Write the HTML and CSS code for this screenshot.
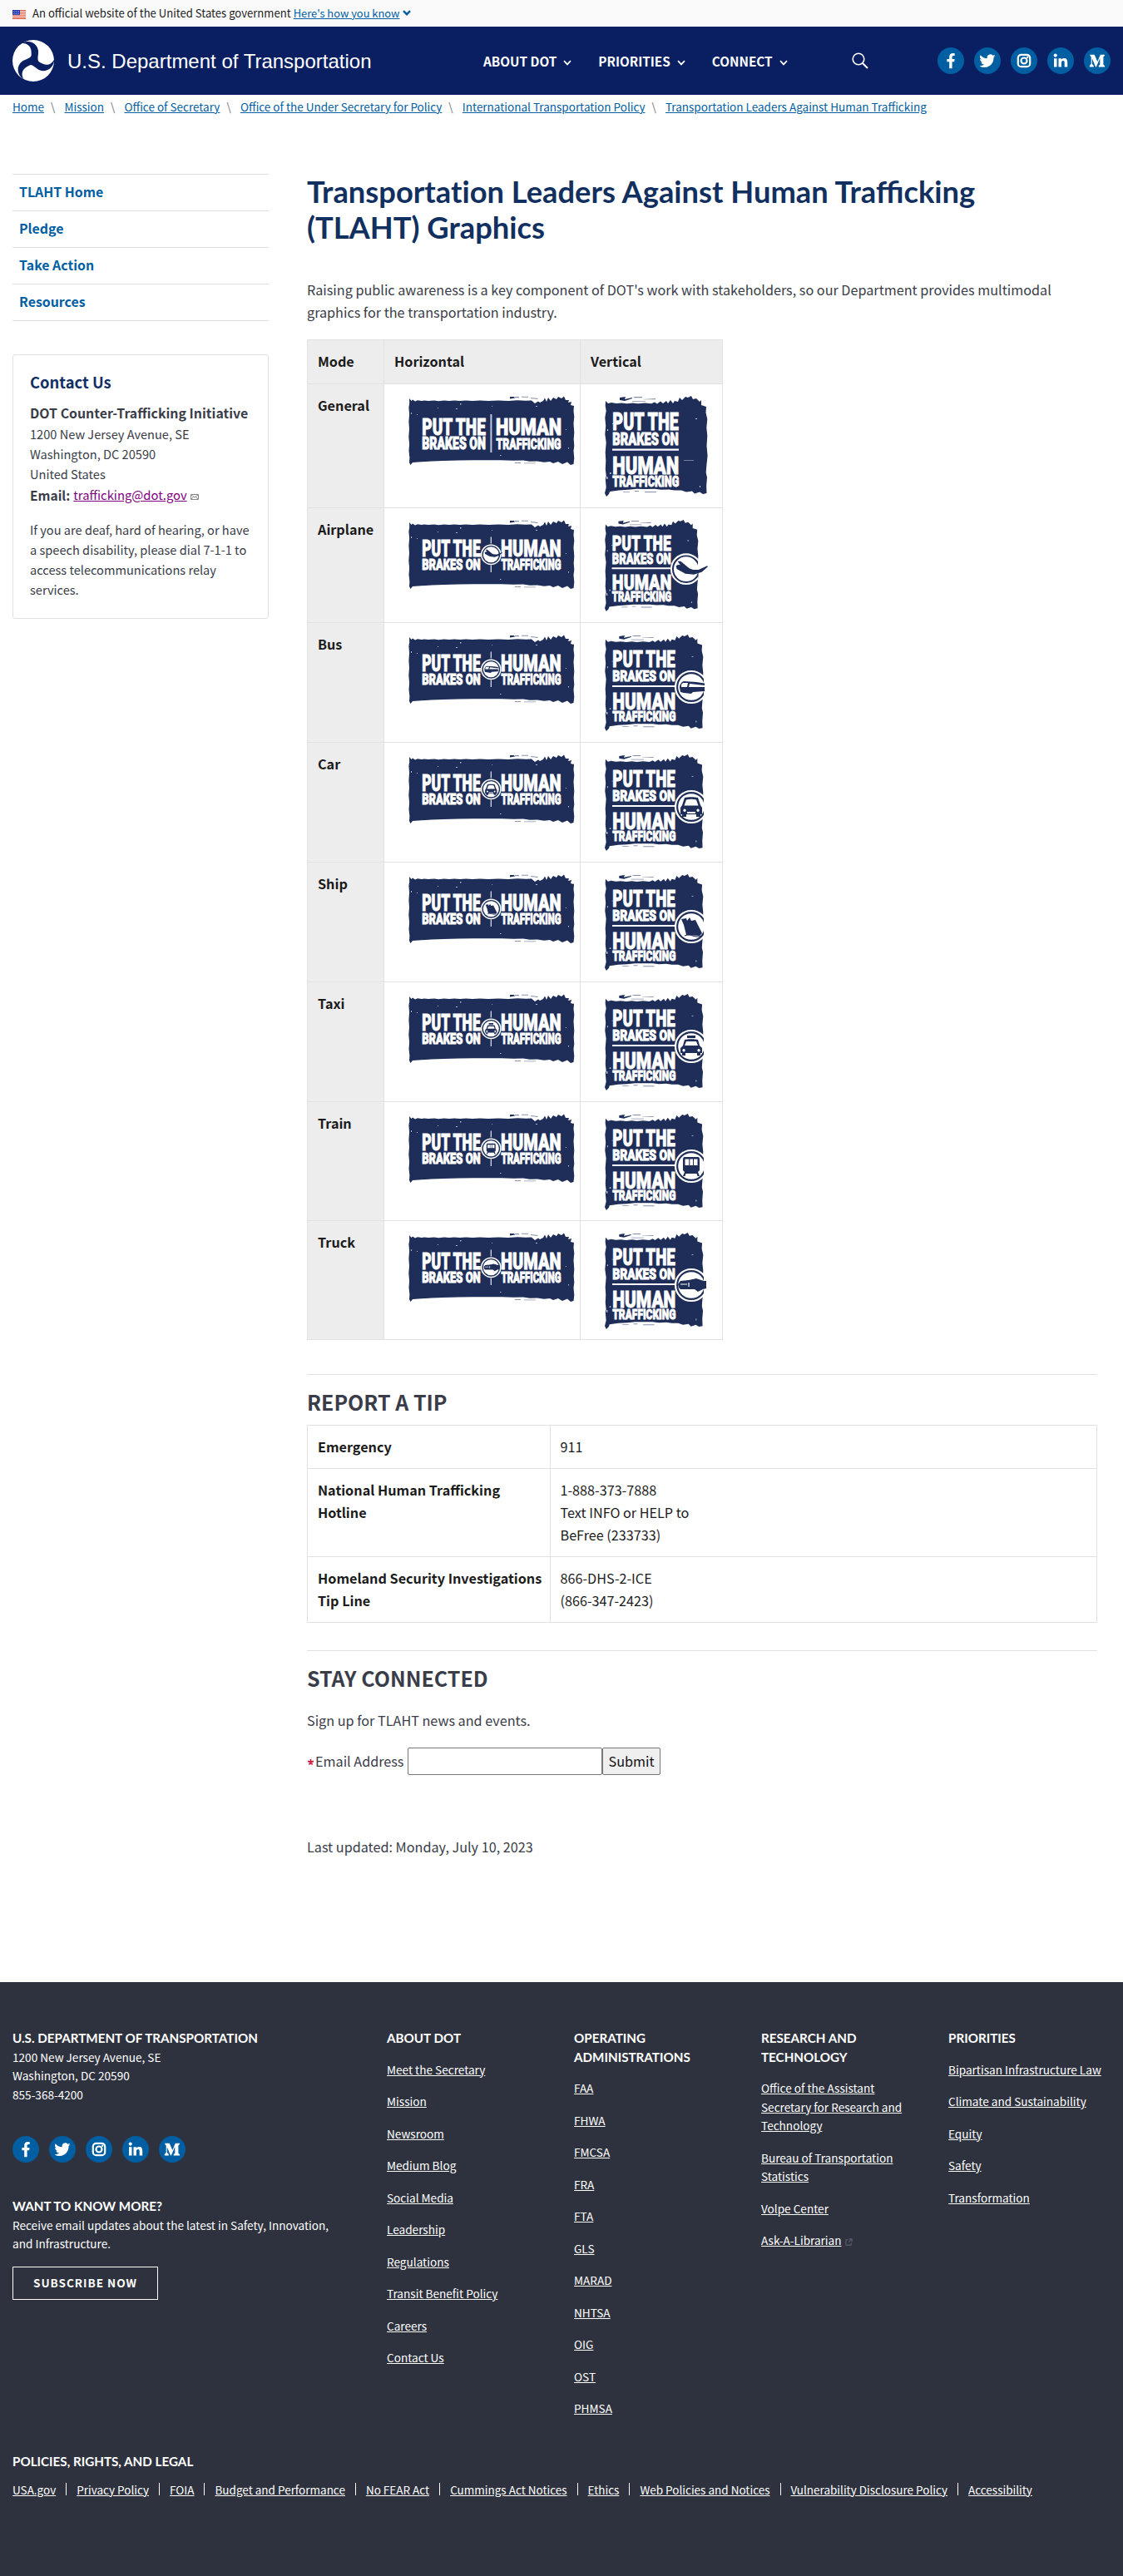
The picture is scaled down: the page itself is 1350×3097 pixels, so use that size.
FILE: index.html
```
<!DOCTYPE html>
<html lang="en">
<head>
<meta charset="utf-8">
<title>Transportation Leaders Against Human Trafficking (TLAHT) Graphics</title>
<link rel="stylesheet" href="styles.css">
</head>
<body>
<svg class="defs" width="0" height="0" aria-hidden="true">
  <symbol id="chev" viewBox="0 0 10 7"><path d="M1 1.2 5 5.4 9 1.2" fill="none" stroke="currentColor" stroke-width="1.7"/></symbol>
  <symbol id="fb" viewBox="0 0 32 32"><circle cx="16" cy="16" r="16" fill="#005ea2"/><path fill="#fff" d="M14.2 25.2v-8H11.400v-3.300h2.800v-2.500c0-2.900 1.700-4.400 4.200-4.400 1.200 0 2.300.2 2.300.2v2.700h-1.400c-1.300 0-1.700.8-1.700 1.700v2.300h3l-.5 3.300h-2.500v8z"/></symbol>
  <symbol id="tw" viewBox="0 0 32 32"><circle cx="16" cy="16" r="16" fill="#005ea2"/><path fill="#fff" d="M25.500 10.300a7.800 7.800 0 0 1-2.200.6 3.900 3.900 0 0 0 1.700-2.200 7.800 7.800 0 0 1-2.500 1 3.900 3.900 0 0 0-6.700 3.600 11.100 11.100 0 0 1-8.100-4.100 3.900 3.900 0 0 0 1.200 5.200 3.900 3.900 0 0 1-1.800-.5c0 1.900 1.300 3.500 3.100 3.900a3.900 3.900 0 0 1-1.700.1 3.900 3.900 0 0 0 3.600 2.700 7.900 7.900 0 0 1-5.700 1.600 11.100 11.100 0 0 0 17.100-9.900 7.900 7.900 0 0 0 2-2z"/></symbol>
  <symbol id="ig" viewBox="0 0 32 32"><circle cx="16" cy="16" r="16" fill="#005ea2"/><g fill="none" stroke="#fff" stroke-width="2.200"><rect x="8.800" y="8.800" width="14.400" height="14.400" rx="3.800"/><circle cx="16" cy="16" r="3.500"/></g><circle cx="20.200" cy="11.800" r="1.200" fill="#fff"/></symbol>
  <symbol id="li" viewBox="0 0 32 32"><circle cx="16" cy="16" r="16" fill="#005ea2"/><path fill="#fff" d="M8 13.200h3.500V23.500H8zM13.500 13.200h3.300v1.500c.6-1 1.700-1.800 3.300-1.800 3.300 0 4.100 2.100 4.100 5v5.600h-3.500v-5c0-1.400-.2-2.600-1.700-2.600s-2 1.200-2 2.600v5h-3.500z"/><circle cx="9.750" cy="9.600" r="2.050" fill="#fff"/></symbol>
  <symbol id="md" viewBox="0 0 32 32"><circle cx="16" cy="16" r="16" fill="#005ea2"/><path fill="#fff" d="M7.300 8.800h5.400L16.300 17l3.500-8.200H25v1.300l-1.600 1.200v9.500l1.600 1.300v1.300h-7.300v-1.300l1.600-1.300v-7.700l-4.500 10.300h-.7L9.800 13.200v6.500l2 2.400v1.300H6.800v-1.300l1.900-2.400v-8.200L7.300 10z"/></symbol>

  <symbol id="brush-h" viewBox="0 0 200 84" preserveAspectRatio="none">
    <path fill="#1e2e58" d="M1 3 3.500 6 5 4.500 8 6.500 11 5.200 16 6 19 5.400 24 6 31 5.500 36 6.200 43 5.600 49 6 55 5.400 62 6 69 5.600 77 6 86 5.500 96 6 108 5.600 120 6 131 5.300 141 5.800 148 5.500 152 9 156 6.500 158 8 162 6 164 2.500 166 7 168 2 171 6 174 2 178 4 180 1 184 3 187 .5 189 5 193 5 192 8 196 7 195 11 199 12 198.500 18 199.300 25 198.500 33 199.300 44 198.700 52 199.300 60 198.500 66 199.300 75 198.500 82 195 83 191 79.500 185 82 180 79 174 81 170 79 163 79.800 155 78.500 146 78.800 138 77.600 126 77.800 112 77.200 95 77.200 78 77.200 60 77.600 42 78 28 78.600 12 79.400 5 80 2.500 83 1 80 1.400 74 .5 66 1.100 58 .3 49 1 40 .4 31 1.100 22 .4 14 1.200 9z"/>
    <path fill="#8b93aa" d="M128 1h5v1.200h-5zM136 .8h8v1h-8zM147 2l9 1-1 1-8-1zM128 80h7v1h-7zM139 80.500h14v.8h-14z"/><path fill="#1e2e58" d="M122 1h5l1 1.500-6 1z"/>
    <path fill="#fff" d="M62 9h1.500v1.500H62zM57 15h2v1h-2zM10 22h1v1h-1zM35 14h1v1h-1zM153 12h2v1h-2zM110 71h1.500v1H110zM3 20h1v2H3zM100 12h1v.8h-1zM189 40h1v1h-1zM192 62h1v1.500h-1z" opacity=".65"/>
  </symbol>
  <symbol id="brush-v" viewBox="0 0 124 121" preserveAspectRatio="none">
    <path fill="#1e2e58" d="M1 6 4 9 8 8 14 9 20 8.600 27 9.300 34 8.500 40 9.300 48 8.500 56 9.300 60 7.500 63 9.500 67 6.500 70 9 74 6 76 9 79 5 82 9 84 6 88 7 90 2 93 5 97 1 100 2 104 0 106 4 110 3 114 7 116 5 116 11 122 13 121.500 20 123.300 28 122.300 38 123.300 48 122.500 60 123.600 72 122.300 84 121.700 92 123 98 122.200 108 122.500 117 118 118 114 115.500 108 117.500 105 114.500 98 115.500 92 113.500 84 113.500 77 112.500 68 112.800 60 111.800 48 112 38 111.800 28 112.800 17 113.500 6 115 5 118 2 121 0 117 1.700 110 .8 100 1.700 96 .8 88 1.300 78 .7 68 1.700 56 .3 46 1.200 36 .3 26 1.700 18 .7 12z"/>
    <path fill="#1e2e58" d="M18 2l7-1-1 3 9-2v1l-9 3-6-1z"/><path fill="#8490ad" d="M35 1h10v1.200H35zM46 4l15-1v1.300H47zM33 6h16v.8H33zM22 115h8v.8h-8zM36 114h5v1h-5zM48 115h14v1H48z"/>
    <path fill="#fff" d="M2 97h1.500v3H2zM6 92h1.500v2H6zM3 40h1v2H3zM109 27h2v1h-2zM95 77h12v.6H95zM114 108h1v2h-1zM9 33h1v1H9z" opacity=".75"/>
  </symbol>

  <symbol id="text-h" viewBox="0 0 200 84">
    <g class="slogan"><text x="16.200" y="44" font-size="27" textLength="70.500" lengthAdjust="spacingAndGlyphs">PUT THE</text><text x="16.200" y="59.700" font-size="18.500" textLength="70.500" lengthAdjust="spacingAndGlyphs">BRAKES ON</text><text x="111" y="44" font-size="27" textLength="72.500" lengthAdjust="spacingAndGlyphs">HUMAN</text><text x="111.500" y="59.700" font-size="17.500" textLength="72" lengthAdjust="spacingAndGlyphs">TRAFFICKING</text></g>
    <path d="M99.300 20.500v8M99.300 54.500v8.500" stroke="#e4e8f2" stroke-width="1.200"/>
    <circle cx="99.300" cy="41.800" r="11.600" fill="#1e2e58" stroke="#fff" stroke-width="1.500"/><circle cx="99.300" cy="41.800" r="9.500" fill="#fff"/>
  </symbol>
  <symbol id="text-v" viewBox="0 0 119 116">
    <g class="slogan"><text x="9.300" y="39" font-size="28" textLength="75.500" lengthAdjust="spacingAndGlyphs">PUT THE</text><text x="9.300" y="56" font-size="18.800" textLength="75.500" lengthAdjust="spacingAndGlyphs">BRAKES ON</text><text x="9.300" y="89.500" font-size="28" textLength="76" lengthAdjust="spacingAndGlyphs">HUMAN</text><text x="9.300" y="104" font-size="16.800" textLength="76" lengthAdjust="spacingAndGlyphs">TRAFFICKING</text></g>
    <path d="M9 62h76" stroke="#fff" stroke-width="2"/>
    <circle cx="104" cy="63" r="19" fill="#1e2e58" stroke="#fff" stroke-width="2.200"/><circle cx="104" cy="63" r="15.800" fill="#fff"/>
  </symbol>

  <symbol id="plane" viewBox="-20 -20 48 40" overflow="visible"><path fill="#1e2e58" d="M-14-5C-11-7-8-7-3-4L8 0 15 0 26-5 27-4 19 3 9 6-2 5-13-1zM-6-3-12-11-8-11 3-2z"/></symbol>
  <symbol id="bus" viewBox="-20 -20 40 40"><path fill="#1e2e58" d="M-14 1C-14-3-12-6-9-7L6-6 16-4.500V5L2 6 0 8-9 7-13 6zM-12 0l0-3 2-2 6 0-1 5zM-2-4-3 0 16 0V-2z" fill-rule="evenodd"/></symbol>
  <symbol id="car" viewBox="-20 -20 40 40"><path fill="#1e2e58" fill-rule="evenodd" d="M-8-11C-4-12 4-12 8-11L11-2 13 1V9H11V12H6V9H-6V12H-11V9H-13V1L-11-2zM-6-8.500-8.500-1.500H8.500L6-8.500C2-9.500-2-9.500-6-8.500zM-8 2.500a1.700 1.700 0 1 0 .1 0zM8 2.500a1.700 1.700 0 1 0 .1 0zM-5 6H5V8H-5z"/></symbol>
  <symbol id="ship" viewBox="-20 -20 40 40"><path fill="#1e2e58" d="M-12-9-6-10-5-7-2-11 0-7 5-8 13 8 10 11-6 10-8 2-9-2z"/><path d="M-8 11q5-2 10 0t10 0" fill="none" stroke="#1e2e58" stroke-width="1.200"/></symbol>
  <symbol id="taxi" viewBox="-20 -20 40 40"><path fill="#1e2e58" fill-rule="evenodd" d="M-5-13H5V-10H-5zM-8-8C-4-9 4-9 8-8L10-1 13 2V8H-13V2L-10-1zM-6-6-8-1H8L6-6zM-9 3a1.700 1.700 0 1 0 .1 0zM9 3a1.700 1.700 0 1 0 .1 0z"/><path d="M-11 8h4v3h-4zM7 8h4v3H7z" fill="#1e2e58"/></symbol>
  <symbol id="train" viewBox="-20 -20 40 40"><path fill="#1e2e58" fill-rule="evenodd" d="M-8-11H8Q10-11 10-8V5L8 7 10 12H7.500L6.500 9H-6.500L-7.500 12H-10L-8 7-10 5V-8Q-10-11-8-11zM-7.500-8.500V-1H-2.700V-8.500zM-1.700-8.500V-1H2V-8.500zM3-8.500V-1H7.500V-8.500z"/></symbol>
  <symbol id="truck" viewBox="-20 -20 40 40"><path fill="#1e2e58" d="M-16-1-13-5-3-6 6-8 15-5 18-5V4L14 5 8 8 4 5-13 5-15 3z"/><path d="M-13-1h8M-3-3v5" stroke="#fff" stroke-width="1.200"/></symbol>
</svg>

<div class="gov-banner">
  <svg class="flag" viewBox="0 0 16 11"><path fill="#fff" d="M0 0h16v11H0z"/><path d="M0 .6h16M0 2.700h16M0 4.800h16M0 6.900h16M0 9h16M0 10.700h16" stroke="#db3e1f" stroke-width="1"/><path fill="#1e33b1" d="M0 0h9v5.800H0z"/><path d="M1 1.500h7M1 3h7M1 4.500h7" stroke="#fff" stroke-width=".6" stroke-dasharray=".7 .9"/></svg>
  <span>An official website of the United States government</span>
  <a class="how" href="#">Here's how you know</a>
  <svg class="how-chev" viewBox="0 0 10 7"><path d="M1 1.200 5 5.200 9 1.200" fill="none" stroke="#005ea2" stroke-width="2.400"/></svg>
</div>

<header class="site-header">
  <svg class="seal" viewBox="-25 -25 50 50"><circle r="25" fill="#fff"/><g fill="#0a1f62"><path id="arm" d="M-14-21C-5-26 5-21 6-12 6.500-6 4-3 7 3L-7 3C-2-3-2-7-2.500-12-3-18-8-21.500-14-21z"/><use href="#arm" transform="rotate(120)"/><use href="#arm" transform="rotate(240)"/></g></svg>
  <span class="site-name">U.S. Department of Transportation</span>
  <nav class="main-nav">
    <a href="#">ABOUT DOT<svg><use href="#chev"/></svg></a>
    <a href="#">PRIORITIES<svg><use href="#chev"/></svg></a>
    <a href="#">CONNECT<svg><use href="#chev"/></svg></a>
  </nav>
  <svg class="search" viewBox="0 0 20 20"><circle cx="8" cy="8" r="6.800" fill="none" stroke="#fff" stroke-width="1.600"/><path d="m13 13 6 6" stroke="#fff" stroke-width="2"/></svg>
  <div class="social"><svg><use href="#fb"/></svg><svg><use href="#tw"/></svg><svg><use href="#ig"/></svg><svg><use href="#li"/></svg><svg><use href="#md"/></svg></div>
</header>

<nav class="crumbs"><a href="#">Home</a><i>\</i><a href="#">Mission</a><i>\</i><a href="#">Office of Secretary</a><i>\</i><a href="#">Office of the Under Secretary for Policy</a><i>\</i><a href="#">International Transportation Policy</a><i>\</i><a href="#">Transportation Leaders Against Human Trafficking</a></nav>

<div class="page">
  <aside class="side">
    <nav class="side-nav"><a href="#">TLAHT Home</a><a href="#">Pledge</a><a href="#">Take Action</a><a href="#">Resources</a></nav>
    <section class="contact">
      <h2>Contact Us</h2>
      <strong>DOT Counter-Trafficking Initiative</strong>
      <p>1200 New Jersey Avenue, SE<br>Washington, DC 20590<br>United States</p>
      <div class="email"><b>Email:</b> <a href="#">trafficking@dot.gov</a><svg viewBox="0 0 10 7"><path d="M.5.5h9v6h-9zM1 1l4 3 4-3M1 6l2.500-2.500M9 6 6.500 3.500" fill="none" stroke="#888" stroke-width="1"/></svg></div>
      <p class="relay">If you are deaf, hard of hearing, or have a speech disability, please dial 7-1-1 to access telecommunications relay services.</p>
    </section>
  </aside>

  <main class="main">
    <h1><span class="plain">Transportation</span> Leaders Against Human Trafficking (TLAHT) Graphics</h1>
    <p class="intro">Raising public awareness is a key component of DOT's work with stakeholders, so our Department provides multimodal graphics for the transportation industry.</p>

    <table class="graphics">
      <thead><tr class="h53"><th class="c1">Mode</th><th class="c2">Horizontal</th><th class="c3">Vertical</th></tr></thead>
      <tbody>
      <tr class="h149"><th>General</th>
        <td><svg class="gh" viewBox="0 0 200 84"><use href="#brush-h" width="200" height="84"/><g class="slogan"><text x="16.300" y="46.500" font-size="28" textLength="76.500" lengthAdjust="spacingAndGlyphs">PUT THE</text><text x="16.300" y="63.600" font-size="19.500" textLength="76.500" lengthAdjust="spacingAndGlyphs">BRAKES ON</text><text x="105" y="46.500" font-size="28" textLength="79" lengthAdjust="spacingAndGlyphs">HUMAN</text><text x="105.500" y="63.600" font-size="18.500" textLength="78" lengthAdjust="spacingAndGlyphs">TRAFFICKING</text></g><path d="M99.400 22v46" stroke="#bccae0" stroke-width="2"/></svg></td>
        <td><svg class="gv" viewBox="0 0 124 121"><use href="#brush-v" width="124" height="121"/><g class="slogan"><text x="9.300" y="41" font-size="30" textLength="79.500" lengthAdjust="spacingAndGlyphs">PUT THE</text><text x="9.300" y="58.700" font-size="20" textLength="79.500" lengthAdjust="spacingAndGlyphs">BRAKES ON</text><text x="9.300" y="93.500" font-size="30" textLength="80" lengthAdjust="spacingAndGlyphs">HUMAN</text><text x="9.300" y="109" font-size="17.500" textLength="80" lengthAdjust="spacingAndGlyphs">TRAFFICKING</text></g><path d="M9 64.700h80" stroke="#fff" stroke-width="2.200"/></svg></td></tr>
      <tr class="h138"><th>Airplane</th>
        <td><svg class="gh" viewBox="0 0 200 84"><use href="#brush-h" width="200" height="84"/><use href="#text-h" width="200" height="84"/><use href="#plane" x="88.500" y="31" width="25" height="21"/></svg></td>
        <td><svg class="gv" viewBox="0 0 124 121"><use href="#brush-v" width="113" height="110"/><svg width="113" height="121"><use href="#text-v" width="112" height="109"/></svg><use href="#plane" x="80" y="41" width="45" height="38"/></svg></td></tr>
      <tr class="h144"><th>Bus</th>
        <td><svg class="gh" viewBox="0 0 200 84"><use href="#brush-h" width="200" height="84"/><use href="#text-h" width="200" height="84"/><use href="#bus" x="88" y="30.500" width="22" height="22"/></svg></td>
        <td><svg class="gv" viewBox="0 0 124 121"><use href="#brush-v" width="119" height="116"/><use href="#text-v" width="119" height="116"/><use href="#bus" x="84" y="43" width="40" height="40"/></svg></td></tr>
      <tr class="h144"><th>Car</th>
        <td><svg class="gh" viewBox="0 0 200 84"><use href="#brush-h" width="200" height="84"/><use href="#text-h" width="200" height="84"/><use href="#car" x="88.300" y="31.200" width="22" height="22"/></svg></td>
        <td><svg class="gv" viewBox="0 0 124 121"><use href="#brush-v" width="119" height="116"/><use href="#text-v" width="119" height="116"/><use href="#car" x="84" y="43" width="40" height="40"/></svg></td></tr>
      <tr class="h144"><th>Ship</th>
        <td><svg class="gh" viewBox="0 0 200 84"><use href="#brush-h" width="200" height="84"/><use href="#text-h" width="200" height="84"/><use href="#ship" x="88.300" y="30.800" width="22" height="22"/></svg></td>
        <td><svg class="gv" viewBox="0 0 124 121"><use href="#brush-v" width="119" height="116"/><use href="#text-v" width="119" height="116"/><use href="#ship" x="84" y="43" width="40" height="40"/></svg></td></tr>
      <tr class="h144"><th>Taxi</th>
        <td><svg class="gh" viewBox="0 0 200 84"><use href="#brush-h" width="200" height="84"/><use href="#text-h" width="200" height="84"/><use href="#taxi" x="88.300" y="31.200" width="22" height="22"/></svg></td>
        <td><svg class="gv" viewBox="0 0 124 121"><use href="#brush-v" width="119" height="116"/><use href="#text-v" width="119" height="116"/><use href="#taxi" x="84" y="43" width="40" height="40"/></svg></td></tr>
      <tr class="h143"><th>Train</th>
        <td><svg class="gh" viewBox="0 0 200 84"><use href="#brush-h" width="200" height="84"/><use href="#text-h" width="200" height="84"/><use href="#train" x="88.300" y="30.800" width="22" height="22"/></svg></td>
        <td><svg class="gv" viewBox="0 0 124 121"><use href="#brush-v" width="119" height="116"/><use href="#text-v" width="119" height="116"/><use href="#train" x="84" y="43" width="40" height="40"/></svg></td></tr>
      <tr class="h143"><th>Truck</th>
        <td><svg class="gh" viewBox="0 0 200 84"><use href="#brush-h" width="200" height="84"/><use href="#text-h" width="200" height="84"/><use href="#truck" x="88.300" y="30.800" width="22" height="22"/></svg></td>
        <td><svg class="gv" viewBox="0 0 124 121"><use href="#brush-v" width="119" height="116"/><use href="#text-v" width="119" height="116"/><use href="#truck" x="84" y="43" width="40" height="40"/></svg></td></tr>
      </tbody>
    </table>

    <hr>
    <h2>REPORT A TIP</h2>
    <table class="tips">
      <tr><th>Emergency</th><td>911</td></tr>
      <tr><th>National Human Trafficking<br>Hotline</th><td>1-888-373-7888<br>Text INFO or HELP to<br>BeFree (233733)</td></tr>
      <tr><th>Homeland Security Investigations<br>Tip Line</th><td>866-DHS-2-ICE<br>(866-347-2423)</td></tr>
    </table>

    <hr class="second">
    <h2>STAY CONNECTED</h2>
    <p class="signup">Sign up for TLAHT news and events.</p>
    <form class="form"><svg class="req" viewBox="0 0 10 10"><path d="M5 1v4M1.200 3.800 5 5l3.800-1.200M2.700 8.300 5 5l2.300 3.300" fill="none" stroke="#d01a3f" stroke-width="1.900"/></svg><label for="em">Email Address</label><input id="em" type="text"><button type="button">Submit</button></form>
    <p class="updated">Last updated: Monday, July 10, 2023</p>
  </main>
</div>

<footer class="footer">
  <div class="cols">
    <div class="about">
      <h3>U.S. DEPARTMENT OF TRANSPORTATION</h3>
      <p>1200 New Jersey Avenue, SE<br>Washington, DC 20590<br>855-368-4200</p>
      <div class="social"><svg><use href="#fb"/></svg><svg><use href="#tw"/></svg><svg><use href="#ig"/></svg><svg><use href="#li"/></svg><svg><use href="#md"/></svg></div>
      <h3>WANT TO KNOW MORE?</h3>
      <p>Receive email updates about the latest in Safety, Innovation,<br>and Infrastructure.</p>
      <a class="subscribe" href="#">SUBSCRIBE NOW</a>
    </div>
    <div class="col"><h3>ABOUT DOT</h3><a href="#">Meet the Secretary</a><a href="#">Mission</a><a href="#">Newsroom</a><a href="#">Medium Blog</a><a href="#">Social Media</a><a href="#">Leadership</a><a href="#">Regulations</a><a href="#">Transit Benefit Policy</a><a href="#">Careers</a><a href="#">Contact Us</a></div>
    <div class="col"><h3>OPERATING ADMINISTRATIONS</h3><a href="#">FAA</a><a href="#">FHWA</a><a href="#">FMCSA</a><a href="#">FRA</a><a href="#">FTA</a><a href="#">GLS</a><a href="#">MARAD</a><a href="#">NHTSA</a><a href="#">OIG</a><a href="#">OST</a><a href="#">PHMSA</a></div>
    <div class="col"><h3>RESEARCH AND<br>TECHNOLOGY</h3><a href="#">Office of the Assistant<br>Secretary for Research and<br>Technology</a><a href="#">Bureau of Transportation<br>Statistics</a><a href="#">Volpe Center</a><span class="ext"><a href="#">Ask-A-Librarian</a><svg viewBox="0 0 10 10"><path d="M4 2H1v7h7V6M5 1h4v4M9 1 5 5" fill="none" stroke="#5b5f6b" stroke-width="1.200"/></svg></span></div>
    <div class="col"><h3>PRIORITIES</h3><a href="#">Bipartisan Infrastructure Law</a><a href="#">Climate and Sustainability</a><a href="#">Equity</a><a href="#">Safety</a><a href="#">Transformation</a></div>
  </div>
  <h3 class="legal-title">POLICIES, RIGHTS, AND LEGAL</h3>
  <nav class="legal"><a href="#">USA.gov</a><a href="#">Privacy Policy</a><a href="#">FOIA</a><a href="#">Budget and Performance</a><a href="#">No FEAR Act</a><a href="#">Cummings Act Notices</a><a href="#">Ethics</a><a href="#">Web Policies and Notices</a><a href="#">Vulnerability Disclosure Policy</a><a href="#">Accessibility</a></nav>
</footer>
</body>
</html>
```
FILE: styles.css
```
* { box-sizing: border-box; }
body {
  margin: 0;
  background: #fff;
  color: #3a3d48;
  font-family: "Noto Sans CJK SC", "Noto Sans", sans-serif;
  font-size: 16.2px;
  line-height: 27px;
}
h1, h2, h3, p { margin: 0; }
a { color: #005ea2; }
svg { display: block; flex: none; }
.defs { position: absolute; }

.gov-banner {
  display: flex;
  align-items: center;
  height: 32px;
  padding: 0 15px;
  background: #fafafa;
  color: #1b1b1b;
  font-size: 13.1px;
  line-height: 30px;
}
.flag { width: 16px; height: 11px; margin: 3px 8px 0 0; }
.how { margin-left: 3px; font-size: 12.900px; }
.how-chev { width: 10px; height: 7px; margin: 0 0 1px 4px; }

.site-header {
  display: flex;
  align-items: center;
  height: 82px;
  padding: 0 15px;
  background: #0a1f62;
}
.seal { width: 50px; height: 50px; }
.site-name {
  flex: none;
  width: 516px;
  padding-left: 16px;
  color: #fff;
  font-family: "Liberation Sans", Arial, sans-serif;
  font-size: 24px;
  white-space: nowrap;
}
.main-nav { display: flex; flex: none; gap: 32px; width: 443px; }
.main-nav a {
  display: flex;
  align-items: center;
  color: #fff;
  font-size: 15.3px;
  font-weight: 700;
  text-decoration: none;
  white-space: nowrap;
}
.main-nav svg { width: 10px; height: 7px; margin: 4px 0 0 8px; }
.search { width: 20px; height: 20px; margin-right: 83px; }
.social { display: flex; gap: 12px; }
.social svg { width: 32px; height: 32px; }

.crumbs {
  display: flex;
  height: 30px;
  padding: 0 15px;
  font-size: 13.500px;
  line-height: 28px;
  white-space: nowrap;
}
.crumbs i { width: 24.500px; padding-left: 8px; color: #71767a; font-style: normal; }

.page { display: flex; height: 2239px; padding: 65px 31px 0 15px; }
.side { flex: none; width: 308px; }
.side-nav { border-top: 1px solid #dcdee0; }
.side-nav a {
  display: block;
  height: 44px;
  padding-left: 8px;
  border-bottom: 1px solid #dcdee0;
  font-size: 15.900px;
  font-weight: 700;
  line-height: 42px;
  text-decoration: none;
}
.contact {
  height: 318px;
  margin-top: 40px;
  padding: 17px 20px 0;
  border: 1px solid #dfe1e2;
  border-radius: 3px;
  font-size: 14.600px;
  line-height: 24px;
}
.contact h2 { color: #112f63; font-size: 18.400px; line-height: 30px; }
.contact strong { display: block; margin-top: 10px; font-size: 15.900px; line-height: 26px; white-space: nowrap; }
.email { display: flex; align-items: center; gap: 4px; height: 25px; }
.email b { font-size: 15.500px; }
.email a { color: #800080; font-size: 14.800px; }
.email svg { width: 10px; height: 7px; margin-top: 6px; }
.relay { margin: 18px -6px 0 0; }

.main { flex: 1; padding-left: 46px; }
.main h1 {
  width: 880px;
  color: #12305f;
  font-family: Lato, sans-serif;
  font-size: 36.300px;
  line-height: 43.200px;
}
.plain { font-variant-ligatures: none; }
.intro { width: 930px; margin-top: 40px; }
table { border-collapse: collapse; color: #1b1b1b; }
.graphics { width: 500px; margin-top: 19px; table-layout: fixed; }
.graphics th, .graphics td { padding: 0; border: 1px solid #e2e2e4; text-align: left; vertical-align: top; }
.graphics th { padding: 12px 0 0 12px; background: #ededee; }
.graphics td { padding: 14px 0 0 29px; }
.c1 { width: 92px; }
.c2 { width: 236px; }
.c3 { width: 171px; }
.h53 { height: 53px; }
.h149 { height: 149px; }
.h138 { height: 138px; }
.h143 { height: 143px; }
.h144 { height: 144px; }
.gh { width: 200px; height: 84px; }
.gv { width: 124px; height: 121px; }
.slogan { fill: #fff; stroke: #fff; stroke-width: .9px; font-family: Roboto, sans-serif; font-weight: 900; }

hr { height: 1px; margin: 41px 0 0; border: 0; background: #dfe1e2; }
.main h2 { margin-top: 14px; font-size: 25px; line-height: 36px; }
.tips { width: 950px; margin-top: 10px; table-layout: fixed; }
.tips th, .tips td { padding: 12px; border: 1px solid #dfe1e2; text-align: left; vertical-align: top; }
.tips th { width: 291.500px; padding-right: 0; white-space: nowrap; }
hr.second { margin-top: 33px; }
.signup { margin-top: 20px; }
.form { display: flex; align-items: center; margin-top: 19px; }
.req { width: 9px; height: 9px; margin: 2px 1px 0 0; }
.form label { width: 111px; white-space: nowrap; }
.form input { width: 234px; height: 33px; border: 1px solid #767676; border-radius: 2px; }
.form button {
  width: 70px;
  height: 33px;
  padding: 0;
  border: 1px solid #767676;
  border-radius: 2px;
  background: #efefef;
  color: #111;
  font: inherit;
  line-height: 29px;
}
.updated { margin-top: 73px; }

.footer {
  height: 714px;
  padding: 56px 15px 0;
  background: #2e323e;
  color: #fff;
  font-size: 13.600px;
  line-height: 22.500px;
}
.footer a { color: #fff; }
.footer h3 { font-family: Lato, sans-serif; font-size: 15.200px; line-height: 22.500px; }
.cols { display: grid; grid-template-columns: 450px 225px 225px 225px 195px; height: 509px; }
.about .social { margin: 39px 0 41px; }
.subscribe {
  display: block;
  width: 175px;
  height: 40px;
  margin-top: 16px;
  border: 1px solid #fff;
  font-weight: 700;
  line-height: 37px;
  letter-spacing: .95px;
  text-align: center;
  text-decoration: none;
}
.col { display: flex; flex-direction: column; align-items: flex-start; gap: 16px; white-space: nowrap; }
.col h3 { width: 170px; margin-bottom: -1px; white-space: normal; }
.ext { display: flex; align-items: center; gap: 4px; }
.ext svg { width: 9px; height: 9px; margin-top: 4px; }
.legal-title { margin-bottom: 11px; }
.legal { display: flex; align-items: center; font-size: 13.500px; white-space: nowrap; }
.legal a + a { display: flex; align-items: center; }
.legal a + a::before { content: ""; width: 1px; height: 15px; margin: 0 12px; background: #fff; }
```
